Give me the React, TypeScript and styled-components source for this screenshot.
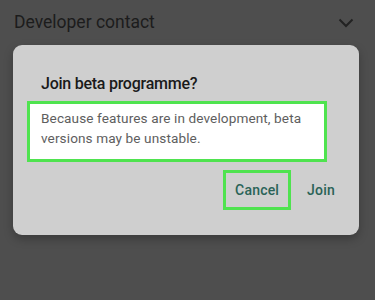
import React from "react";
import styled, { createGlobalStyle } from "styled-components";

const Global = createGlobalStyle`
  html, body { margin: 0; padding: 0; }
  body {
    background: #4e4e4e;
    font-family: Roboto, "Noto Sans", "Liberation Sans", sans-serif;
  }
`;

const Page = styled.div`
  width: 375px;
  height: 300px;
  background: #4e4e4e;
  overflow: hidden;
`;

const Header = styled.div`
  height: 42px;
  display: flex;
  align-items: center;
  justify-content: space-between;
  padding: 0 21px 0 14px;
`;

const HeaderTitle = styled.span`
  font-size: 17.5px;
  color: #1c1c1c;
  margin-top: 1px;
`;

const Dialog = styled.div`
  margin: 3px 16px 0 13px;
  height: 190px;
  box-sizing: border-box;
  background: #cfcfcf;
  border-radius: 9px;
  box-shadow: 0 4px 10px rgba(0, 0, 0, 0.25);
  padding: 28px 8px 0 14px;
  display: flex;
  flex-direction: column;
`;

const Title = styled.h2`
  margin: 0 0 6px 14px;
  font-size: 16px;
  font-weight: 500;
  color: #1a1a1a;
  line-height: 22px;
  letter-spacing: -0.25px;
`;

const Highlight = styled.div`
  border: 3px solid #4fe34f;
  box-sizing: border-box;
  background: #ffffff;
`;

const Body = styled(Highlight)`
  width: 300px;
  height: 61px;
  padding: 5px 10px 0 11px;
  font-size: 13.6px;
  line-height: 19.5px;
  color: #5e5e5e;
  letter-spacing: 0.1px;
`;

const Actions = styled.div`
  display: flex;
  justify-content: flex-end;
  align-items: center;
  margin-top: 8px;
`;

const Action = styled.button<{ $highlight?: boolean }>`
  font-family: inherit;
  font-size: 14px;
  font-weight: 500;
  color: #2a6357;
  background: transparent;
  border: 3px solid ${(p) => (p.$highlight ? "#4fe34f" : "transparent")};
  height: 40px;
  padding: 0 ${(p) => (p.$highlight ? "9px" : "13px")};
  letter-spacing: 0.2px;
  cursor: pointer;
`;

const Chevron = () => (
  <svg width="16" height="10" viewBox="0 0 16 10" style={{ marginTop: 3 }}>
    <path d="M1.5 1.5 L8 8 L14.5 1.5" fill="none" stroke="#222" strokeWidth="2" />
  </svg>
);

export default function App() {
  return (
    <Page>
      <Global />
      <Header>
        <HeaderTitle>Developer contact</HeaderTitle>
        <Chevron />
      </Header>
      <Dialog>
        <Title>Join beta programme?</Title>
        <Body>Because features are in development, beta versions may be unstable.</Body>
        <Actions>
          <Action $highlight>Cancel</Action>
          <Action>Join</Action>
        </Actions>
      </Dialog>
    </Page>
  );
}
